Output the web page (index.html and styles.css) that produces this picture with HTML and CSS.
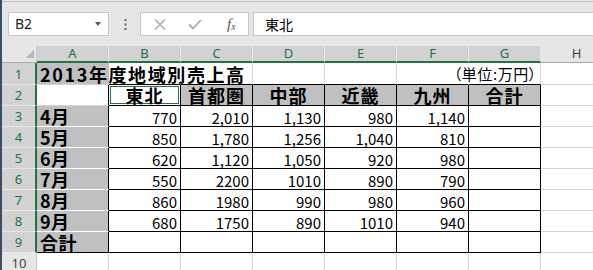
FILE: index.html
```html
<!DOCTYPE html>
<html lang="ja">
<head>
<meta charset="utf-8">
<title>Excel</title>
<link rel="stylesheet" href="styles.css">
</head>
<body>
<div class="app">
  <div class="fbar">
    <div class="namebox"><span class="nb-text">B2</span><span class="caret"></span></div>
    <div class="dots">
      <svg width="3" height="11" viewBox="0 0 3 11"><rect x="0.5" y="0" width="2" height="2" fill="#666"/><rect x="0.5" y="4.5" width="2" height="2" fill="#666"/><rect x="0.5" y="9" width="2" height="2" fill="#666"/></svg>
    </div>
    <div class="fbtns">
      <svg class="ic-x" width="12" height="11" viewBox="0 0 12 11"><path d="M1 0.5 L11 10.5 M11 0.5 L1 10.5" stroke="#a8a8a8" stroke-width="1.3" fill="none"/></svg>
      <svg class="ic-ok" width="14" height="11" viewBox="0 0 14 11"><path d="M1 5.5 L5 9.5 L13 1" stroke="#a8a8a8" stroke-width="1.8" fill="none"/></svg>
      <span class="fx">f<span class="fx-sub">x</span></span>
    </div>
    <div class="finput">東北</div>
  </div>

  <div class="sheet">
    <!-- column headers -->
    <div class="corner"><svg width="8" height="8" viewBox="0 0 8 8"><polygon points="8,0 8,8 0,8" fill="#b4b4b4"/></svg></div>
    <div class="ch sel">A</div>
    <div class="ch sel">B</div>
    <div class="ch sel">C</div>
    <div class="ch sel">D</div>
    <div class="ch sel">E</div>
    <div class="ch sel">F</div>
    <div class="ch sel">G</div>
    <div class="ch">H</div>

    <!-- row 1 -->
    <div class="rh sel">1</div>
    <div class="c fill title-cell"><span class="title">2013年度地域別売上高</span></div>
    <div class="c r1 nor"></div>
    <div class="c r1"></div>
    <div class="c r1"></div>
    <div class="c r1"></div>
    <div class="c r1 nor"></div>
    <div class="c r1 unit-cell"><span class="unit">（単位:万円）</span></div>
    <div class="c"></div>

    <!-- row 2 -->
    <div class="rh sel">2</div>
    <div class="c tl"></div>
    <div class="c t hd active">東北</div>
    <div class="c t hd fill">首都圏</div>
    <div class="c t hd fill">中部</div>
    <div class="c t hd fill">近畿</div>
    <div class="c t hd fill">九州</div>
    <div class="c t hd fill">合計</div>
    <div class="c"></div>

    <!-- row 3 -->
    <div class="rh sel">3</div>
    <div class="c tl fill lab wb">4月</div>
    <div class="c t num">770</div>
    <div class="c t num">2,010</div>
    <div class="c t num">1,130</div>
    <div class="c t num">980</div>
    <div class="c t num">1,140</div>
    <div class="c t"></div>
    <div class="c"></div>

    <!-- row 4 -->
    <div class="rh sel">4</div>
    <div class="c tl fill lab wb">5月</div>
    <div class="c t num">850</div>
    <div class="c t num">1,780</div>
    <div class="c t num">1,256</div>
    <div class="c t num">1,040</div>
    <div class="c t num">810</div>
    <div class="c t"></div>
    <div class="c"></div>

    <!-- row 5 -->
    <div class="rh sel">5</div>
    <div class="c tl fill lab wb">6月</div>
    <div class="c t num">620</div>
    <div class="c t num">1,120</div>
    <div class="c t num">1,050</div>
    <div class="c t num">920</div>
    <div class="c t num">980</div>
    <div class="c t"></div>
    <div class="c"></div>

    <!-- row 6 -->
    <div class="rh sel">6</div>
    <div class="c tl fill lab wb">7月</div>
    <div class="c t num">550</div>
    <div class="c t num">2200</div>
    <div class="c t num">1010</div>
    <div class="c t num">890</div>
    <div class="c t num">790</div>
    <div class="c t"></div>
    <div class="c"></div>

    <!-- row 7 -->
    <div class="rh sel">7</div>
    <div class="c tl fill lab wb">8月</div>
    <div class="c t num">860</div>
    <div class="c t num">1980</div>
    <div class="c t num">990</div>
    <div class="c t num">980</div>
    <div class="c t num">960</div>
    <div class="c t"></div>
    <div class="c"></div>

    <!-- row 8 -->
    <div class="rh sel">8</div>
    <div class="c tl fill lab wb">9月</div>
    <div class="c t num">680</div>
    <div class="c t num">1750</div>
    <div class="c t num">890</div>
    <div class="c t num">1010</div>
    <div class="c t num">940</div>
    <div class="c t"></div>
    <div class="c"></div>

    <!-- row 9 -->
    <div class="rh sel">9</div>
    <div class="c tl fill lab bb">合計</div>
    <div class="c t"></div>
    <div class="c t"></div>
    <div class="c t"></div>
    <div class="c t"></div>
    <div class="c t"></div>
    <div class="c t"></div>
    <div class="c"></div>

    <!-- row 10 -->
    <div class="rh">10</div>
    <div class="c"></div>
    <div class="c"></div>
    <div class="c"></div>
    <div class="c"></div>
    <div class="c"></div>
    <div class="c"></div>
    <div class="c"></div>
    <div class="c"></div>
  </div>
</div>
</body>
</html>
```

FILE: styles.css
```css
html, body {
  margin: 0;
  padding: 0;
}

body {
  width: 593px;
  height: 270px;
  overflow: hidden;
  background: #e6e6e6;
}

.app {
  width: 593px;
  height: 270px;
  box-sizing: border-box;
  border-left: 2px solid #3d4d5f;
  overflow: hidden;
  background: #e6e6e6;
}

/* ---------- formula bar ---------- */
.fbar {
  height: 46px;
  box-sizing: border-box;
  display: flex;
  align-items: flex-start;
  padding: 12px 0 0 6px;
  background: linear-gradient(#e6e6e6 0 1px, #c4c4c4 1px 2px, #e6e6e6 2px);
}

.namebox {
  width: 101px;
  height: 24px;
  box-sizing: border-box;
  background: #fff;
  border: 1px solid #c6c6c6;
  display: flex;
  align-items: center;
  padding-left: 6px;
  font-family: "Noto Sans", "Open Sans", sans-serif;
  font-size: 14px;
  color: #222;
}

.nb-text {
  line-height: 1;
}

.caret {
  margin-left: auto;
  margin-right: 7px;
  width: 0;
  height: 0;
  border-left: 3.5px solid transparent;
  border-right: 3.5px solid transparent;
  border-top: 4px solid #555;
}

.dots {
  width: 31px;
  height: 24px;
  display: flex;
  align-items: center;
  justify-content: center;
  padding-left: 1px;
  box-sizing: border-box;
}

.fbtns {
  width: 109px;
  height: 24px;
  box-sizing: border-box;
  background: #fff;
  border: 1px solid #c6c6c6;
  display: flex;
  align-items: center;
  padding-left: 13px;
}

.ic-x {
  margin-right: 22px;
}

.ic-ok {
  margin-right: 25px;
}

.fx {
  font-family: "Liberation Serif", serif;
  font-style: italic;
  font-size: 15px;
  color: #555;
  line-height: 1;
}

.fx-sub {
  font-size: 10px;
  vertical-align: -1px;
}

.finput {
  flex: 1;
  margin-left: 4px;
  height: 24px;
  box-sizing: border-box;
  background: #fff;
  border: 1px solid #c6c6c6;
  border-right: none;
  display: flex;
  align-items: center;
  padding-left: 11px;
  font-family: "Noto Sans CJK JP", sans-serif;
  font-size: 14px;
  color: #000;
}

/* ---------- sheet grid ---------- */
.sheet {
  display: grid;
  grid-template-columns: 35px repeat(8, 72px);
  grid-template-rows: 17px 22px repeat(9, 21px);
  background: #fff;
  width: 611px;
}

.corner {
  background: #e6e6e6;
  border-right: 1px solid #c8c8c8;
  border-bottom: 1px solid #ababab;
  box-sizing: border-box;
  display: flex;
  align-items: flex-end;
  justify-content: flex-end;
  padding: 0 2px 4px 0;
}

.ch {
  box-sizing: border-box;
  background: #e6e6e6;
  color: #444;
  border-right: 1px solid #c8c8c8;
  border-bottom: 1px solid #ababab;
  font-family: "Noto Sans", "Open Sans", sans-serif;
  font-size: 13px;
  line-height: 15px;
  text-align: center;
}

.ch.sel {
  background: #d2d2d2;
  color: #217346;
  border-right-color: #e6e6e6;
  border-bottom: 2px solid #217346;
}

.rh {
  box-sizing: border-box;
  background: #e6e6e6;
  color: #444;
  border-right: 1px solid #c8c8c8;
  border-bottom: 1px solid #d0d0d0;
  font-family: "Noto Sans", "Open Sans", sans-serif;
  font-size: 13px;
  line-height: 15px;
  display: flex;
  align-items: center;
  justify-content: center;
  padding-top: 1px;
  overflow: hidden;
}

.rh.sel {
  background: #d2d2d2;
  color: #217346;
  border-right: 2px solid #217346;
  border-bottom-color: #e6e6e6;
}

.c {
  box-sizing: border-box;
  border-right: 1px solid #d4d4d4;
  border-bottom: 1px solid #d4d4d4;
  display: flex;
  align-items: flex-end;
  white-space: nowrap;
  color: #000;
  font-family: "Noto Sans CJK JP", sans-serif;
  min-width: 0;
}

.fill {
  background: #c0c0c0;
}

.title-cell {
  border-right-color: #c0c0c0;
  align-items: center;
  padding-left: 3px;
}

.title {
  font-size: 18px;
  font-weight: 700;
  letter-spacing: 1.6px;
  line-height: 20px;
}

.r1 {
  border-bottom-color: #000;
}

.nor {
  border-right-color: transparent;
}

.unit-cell {
  justify-content: flex-end;
  padding-right: 3px;
  align-items: center;
  border-right-color: #d4d4d4;
}

.unit {
  font-size: 15px;
  line-height: 18px;
  font-feature-settings: "palt";
  letter-spacing: 0.6px;
}

.tl {
  border-right-color: #000;
}

.t {
  border-right-color: #000;
  border-bottom-color: #000;
}

.hd {
  justify-content: center;
  align-items: center;
  font-size: 18px;
  font-weight: 700;
  letter-spacing: 1px;
  line-height: 20px;
}

.active {
  background: #fff;
  box-shadow: inset 0 0 0 1px #fff, inset 0 0 0 2px #217346;
}

.lab {
  align-items: center;
  padding-left: 3px;
  font-size: 18px;
  font-weight: 700;
  letter-spacing: 0.5px;
  line-height: 20px;
}

.wb {
  border-bottom-color: #fff;
}

.bb {
  border-bottom-color: #000;
}

.num {
  justify-content: flex-end;
  padding-right: 3px;
  padding-bottom: 1px;
  font-size: 15px;
  line-height: 1;
}
```
